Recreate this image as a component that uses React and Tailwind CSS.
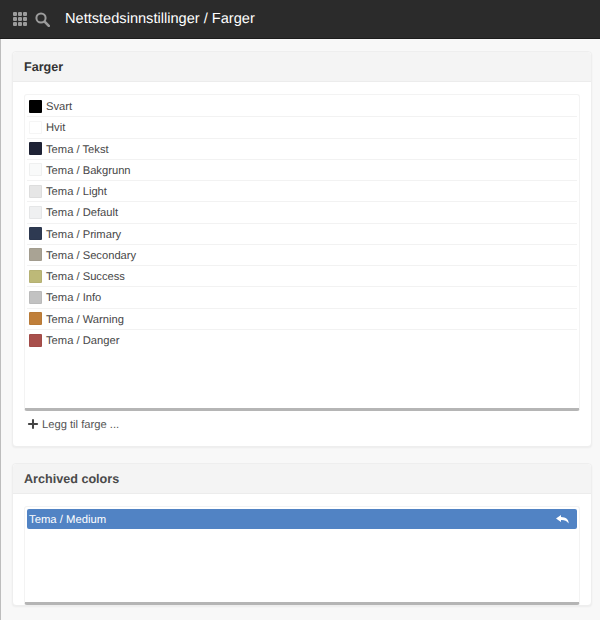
import { Plus } from "lucide-react";

const colors = [
  { name: "Svart", hex: "#000000" },
  { name: "Hvit", hex: "#ffffff" },
  { name: "Tema / Tekst", hex: "#1f2336" },
  { name: "Tema / Bakgrunn", hex: "#f9fafa" },
  { name: "Tema / Light", hex: "#e6e6e6" },
  { name: "Tema / Default", hex: "#eff0f1" },
  { name: "Tema / Primary", hex: "#2e3a52" },
  { name: "Tema / Secondary", hex: "#a9a394" },
  { name: "Tema / Success", hex: "#bdb978" },
  { name: "Tema / Info", hex: "#c2c2c2" },
  { name: "Tema / Warning", hex: "#c07f3a" },
  { name: "Tema / Danger", hex: "#a84f4b" },
];

function GridIcon() {
  return (
    <div className="grid grid-cols-3 gap-px w-[14px] h-[14px]">
      {Array.from({ length: 9 }).map((_, i) => (
        <div key={i} className="bg-[#9c9c9c] rounded-[1px]" />
      ))}
    </div>
  );
}

function SearchIcon() {
  return (
    <svg width="15" height="15" viewBox="0 0 15 15" fill="none" stroke="#9c9c9c" className="ml-[8px]">
      <circle cx="6" cy="6" r="4.6" strokeWidth="2" />
      <path d="M9.6 9.6 L13.8 13.8" strokeWidth="2.6" strokeLinecap="round" />
    </svg>
  );
}

function Card({ title, titleColor, children }) {
  return (
    <div className="bg-white border border-[#eeeeee] rounded-[4px] shadow-[0_1px_2px_rgba(0,0,0,0.05)]">
      <div className={`h-[30px] flex items-center pt-px px-[11px] bg-[#f4f4f4] border-b border-[#ececec] rounded-t-[4px] text-[12.6px] font-bold ${titleColor}`}>
        {title}
      </div>
      {children}
    </div>
  );
}

export default function App() {
  return (
    <div className="w-[600px] h-[620px] overflow-hidden bg-[#f8f8f8] font-['Liberation_Sans',Arial,sans-serif] [text-rendering:geometricPrecision]">
      <header className="h-[39px] bg-[#2b2b2b] border-b border-[#1c1c1c] flex items-center pl-[13px] text-white">
        <GridIcon />
        <SearchIcon />
        <h1 className="ml-[15px] text-[14.6px] leading-none">Nettstedsinnstillinger / Farger</h1>
      </header>

      <main className="h-[581px] border-l border-[#bdbdbd] pl-[11px] pr-[8px] pt-[12px] flex flex-col gap-[16px]">
        <Card title="Farger" titleColor="text-[#333333]">
          <div className="px-[11px] pt-[12px]">
            <ul className="h-[317px] border border-[#f3f3f3] border-b-[3px] border-b-[#b5b5b5] rounded-[3px] px-[2px] py-px">
              {colors.map((color) => (
                <li key={color.name} className="h-[21.25px] flex items-center gap-[4px] border-b border-[#f2f2f2] last:border-b-0 px-[2px] text-[11.2px] text-[#484848]">
                  <span
                    className="w-[13px] h-[13px] rounded-[1px] shrink-0 border border-[#0000000a]"
                    style={{ background: color.hex }}
                  />
                  <span className="pt-[3px]">{color.name}</span>
                </li>
              ))}
            </ul>
          </div>
          <div className="h-[35px] pl-[13px] pb-[6px] flex items-center gap-[2px] text-[11.2px] text-[#555555]">
            <Plus size={14} strokeWidth={3.5} className="text-[#444444] mb-[3px]" />
            Legg til farge ...
          </div>
        </Card>

        <Card title="Archived colors" titleColor="text-[#4a4a4a]">
          <div className="px-[11px] pt-[12px]">
            <div className="h-[99px] border border-[#f3f3f3] border-b-[3px] border-b-[#b5b5b5] rounded-[3px] px-[2px] pt-[2px]">
              <div className="h-[20px] bg-[#5183c4] rounded-[2px] flex items-center justify-between pl-[2px] pr-[8px] text-[11.3px] text-white">
                <span className="pt-[2px]">Tema / Medium</span>
                <svg width="13" height="9" viewBox="0 0 13 9" fill="currentColor">
                  <path d="M5 0 L0 3.4 L5 7 V5 C8 4.8 10.5 5.6 12.6 8.4 C12.8 4.6 10 2.2 5 2 Z" />
                </svg>
              </div>
            </div>
          </div>
        </Card>
      </main>
    </div>
  );
}
